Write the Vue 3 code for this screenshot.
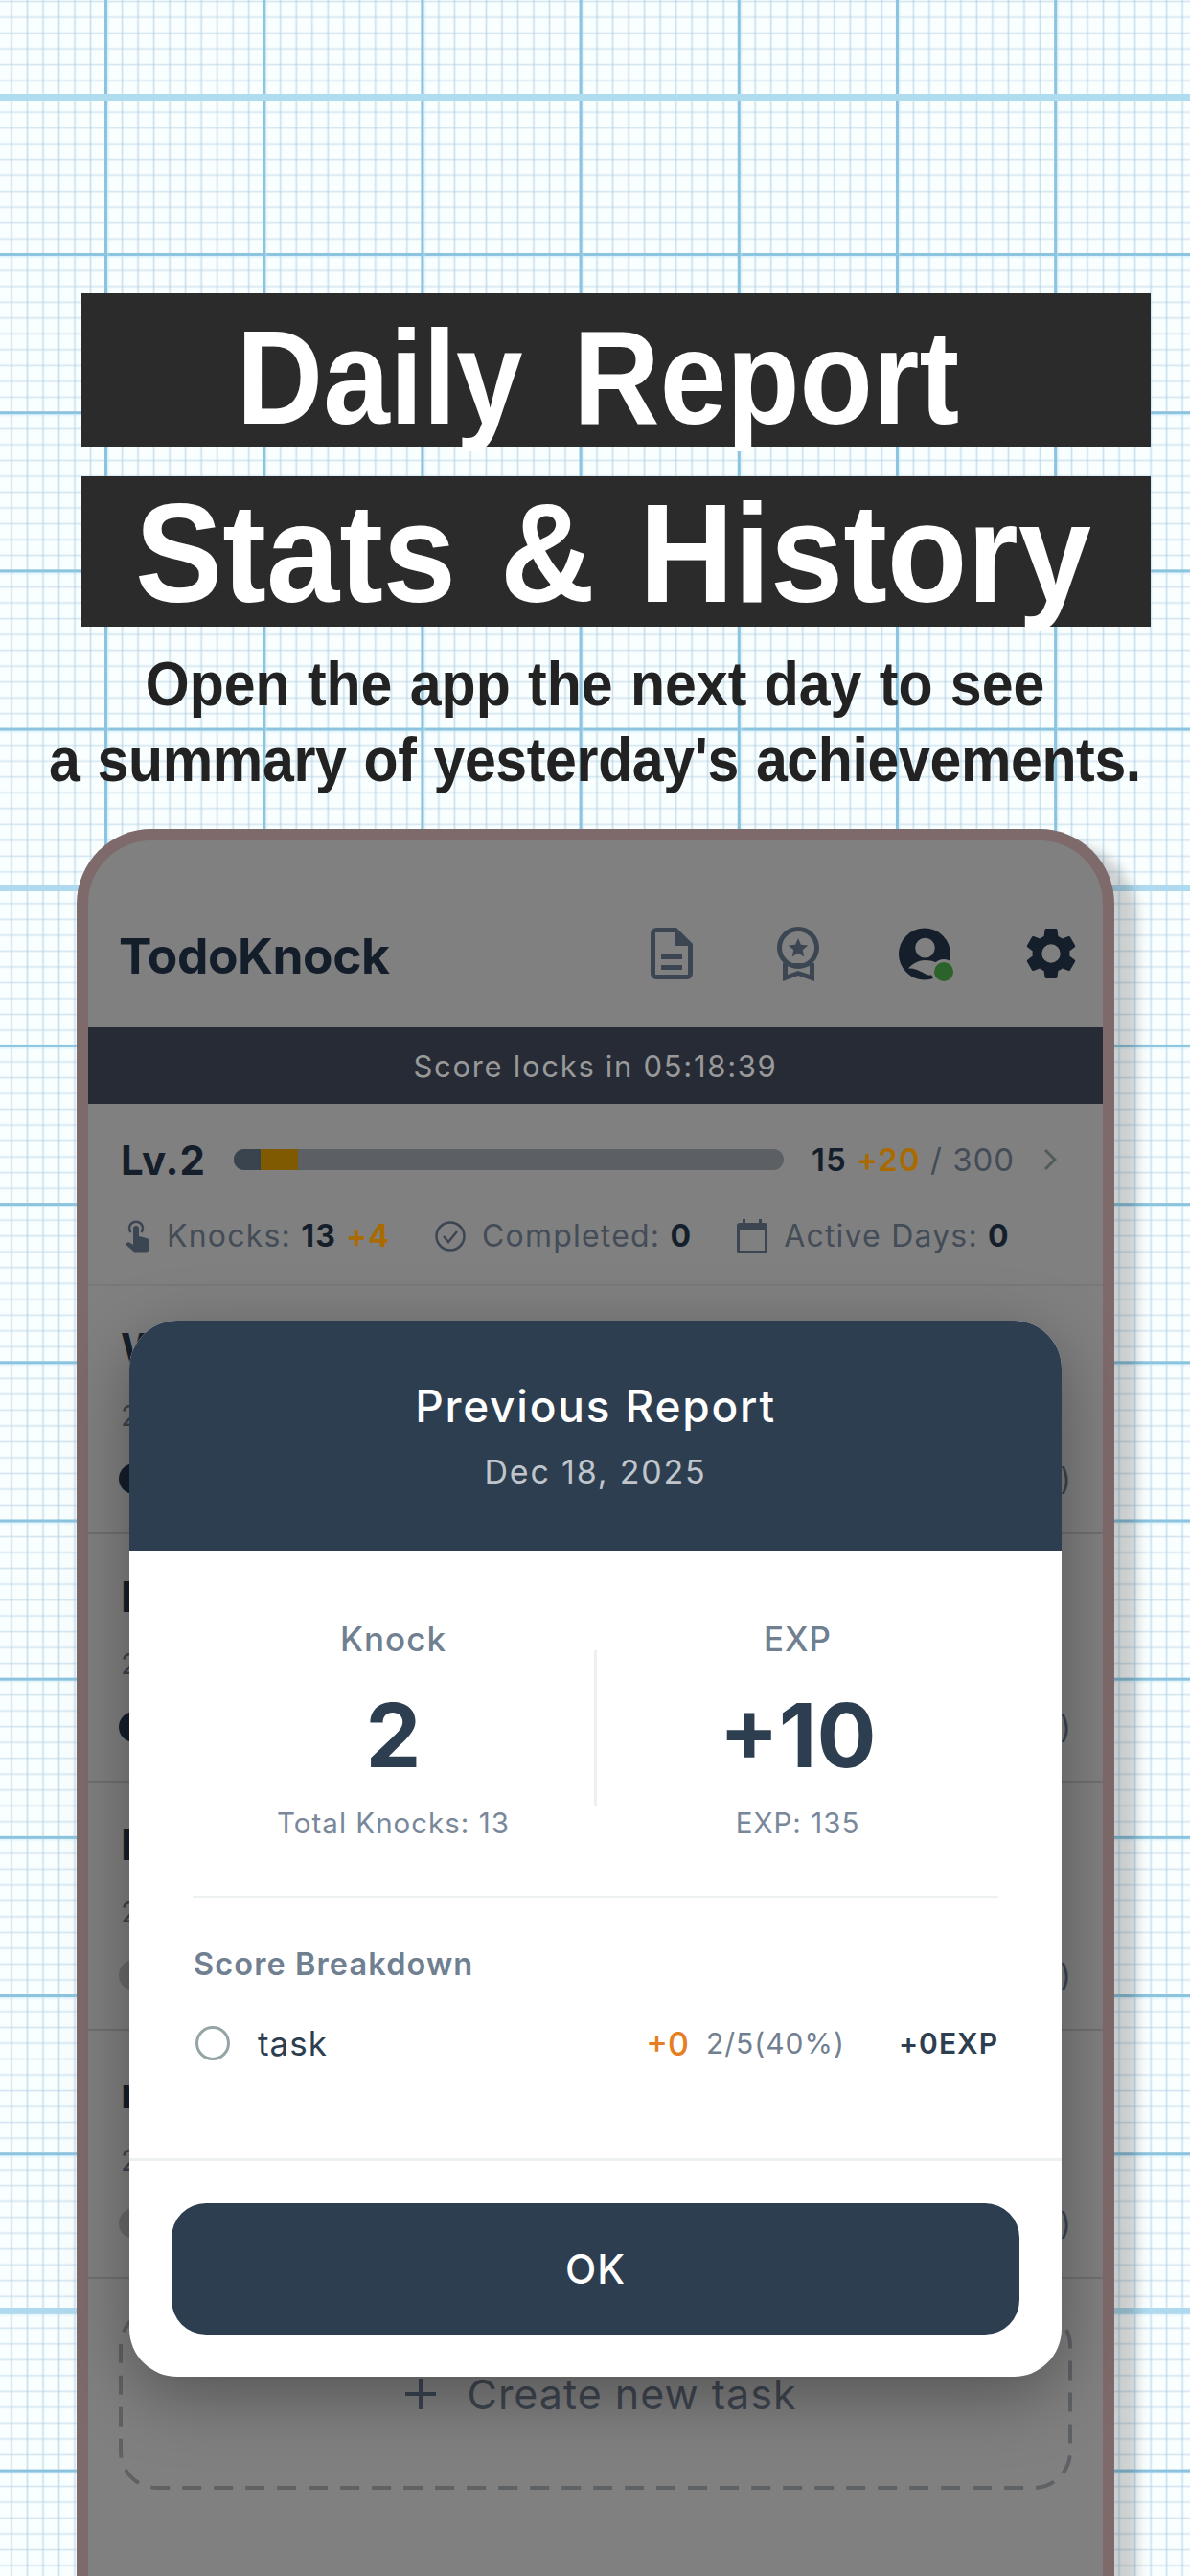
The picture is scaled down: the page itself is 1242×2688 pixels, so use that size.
<script setup>
const rows = [
  { id: 1, name: 'W', on: true },
  { id: 2, name: 'P', on: true },
  { id: 3, name: 'M', on: false },
  { id: 4, name: 'm', on: false },
]
</script>

<template>
  <div class="page">
    <div class="hero">
      <h1 class="bar bar-one"><span>Daily Report</span></h1>
      <h1 class="bar bar-two"><span>Stats &amp; History</span></h1>
      <p class="sub">
        <span>Open the app the next day to see</span>
        <span class="sub-two">a summary of yesterday's achievements.</span>
      </p>
    </div>

    <div class="phone">
      <header class="top">
        <span class="logo">TodoKnock</span>
        <div class="top-icons">
          <span class="slot">
            <svg width="44" height="54" viewBox="0 0 44 54"><path fill="#3b4652" fill-rule="evenodd" d="M6 0H27L44 17V48a6 6 0 0 1-6 6H6a6 6 0 0 1-6-6V6a6 6 0 0 1 6-6zM5 5V49H39V19H25V5zM11 28H33V33H11zM11 39H33V44H11z"/></svg>
          </span>
          <span class="slot">
            <svg width="44" height="57" viewBox="0 0 44 57"><circle cx="22" cy="22" r="19.500" fill="none" stroke="#3b4652" stroke-width="5"/><path fill="#3b4652" d="M22 12l2.900 6.800 7.300.6-5.500 4.800 1.600 7.200L22 27.600l-6.300 3.800 1.600-7.200-5.500-4.800 7.300-.6z"/><path fill="#3b4652" fill-rule="evenodd" d="M6 38V57L22 51 39 57V38zM11 41Q22 45 34 41V50L22 46 11 50z"/></svg>
          </span>
          <span class="slot avatar">
            <svg width="55" height="55" viewBox="0 0 55 55"><path fill="#151f2b" fill-rule="evenodd" d="M27.500 0a27.500 27.500 0 1 0 0 55a27.500 27.500 0 1 0 0-55zM28 10.500a10.500 10.500 0 1 1 0 21a10.500 10.500 0 0 1 0-21zM10 43C15 37 22 34 28 34C36 34 44 37 49 43L42 51C38 50 35 50 32 50C26 49 20 42 10 43z"/></svg>
            <i class="dot"></i>
          </span>
          <span class="slot">
            <svg width="52" height="54" viewBox="2.500 2 19 20"><path fill="#151f2b" d="M19.140 12.940c.04-.3.06-.61.06-.94s-.02-.64-.07-.94l2.030-1.580a.49.49 0 0 0 .12-.61l-1.920-3.320a.49.49 0 0 0-.59-.22l-2.390.96c-.5-.38-1.030-.7-1.620-.94l-.36-2.540a.48.48 0 0 0-.48-.41h-3.840a.48.48 0 0 0-.47.41l-.36 2.540c-.59.24-1.130.57-1.620.94l-2.390-.96a.48.48 0 0 0-.59.22L2.740 8.870a.48.480 0 0 0 .12.61l2.030 1.580c-.05.3-.09.63-.09.94s.02.64.07.94l-2.030 1.580a.49.49 0 0 0-.12.61l1.920 3.320c.12.22.37.29.59.22l2.390-.96c.5.38 1.030.7 1.620.94l.36 2.540c.05.24.24.41.48.41h3.840c.24 0 .44-.17.47-.41l.36-2.540c.59-.24 1.130-.56 1.620-.94l2.390.96c.22.08.47 0 .59-.22l1.920-3.320a.47.47 0 0 0-.12-.61l-2.010-1.580zM12 15.600A3.600 3.600 0 1 1 12 8.400a3.600 3.600 0 0 1 0 7.200z"/></svg>
          </span>
        </div>
      </header>

      <div class="banner">Score locks in 05:18:39</div>

      <section class="level">
        <div class="level-row">
          <b class="lv">Lv.2</b>
          <div class="track"><i class="fill-a"></i><i class="fill-b"></i></div>
          <span class="exp"><b>15</b> <b class="gold">+20</b> / 300</span>
          <svg class="chev" width="14" height="24" viewBox="0 0 14 24"><path d="M2 2l10 10L2 22" fill="none" stroke="#525b5c" stroke-width="3"/></svg>
        </div>
        <div class="stats">
          <span class="stat">
            <svg class="hand" width="26" height="34" viewBox="0 0 26 34"><path d="M5.500 13A7 7 0 1 1 16.500 13" fill="none" stroke="#3b4652" stroke-width="2.500"/><path fill="#3b4652" d="M8 9a3 3 0 0 1 6 0v8l8 2c1.500.4 2.500 1.500 2.500 3v8a3 3 0 0 1-3 3.500H9L0 25.500c1-2 3-2.500 5-1.500l3 2z"/></svg>
            <span>Knocks: <b>13</b> <b class="gold">+4</b></span>
          </span>
          <span class="stat">
            <svg width="32" height="32" viewBox="0 0 32 32"><circle cx="16" cy="16" r="14.500" fill="none" stroke="#3b4652" stroke-width="2.500"/><path d="M9 16l5 6 9-11" fill="none" stroke="#3b4652" stroke-width="2.500"/></svg>
            <span>Completed: <b>0</b></span>
          </span>
          <span class="stat">
            <svg width="32" height="36" viewBox="0 0 32 36"><path fill="#3b4652" fill-rule="evenodd" d="M6 0h3v4h14V0h3v4h3a3 3 0 0 1 3 3v26a3 3 0 0 1-3 3H3a3 3 0 0 1-3-3V7a3 3 0 0 1 3-3h3zM3 12v21h26V12z"/></svg>
            <span>Active Days: <b>0</b></span>
          </span>
        </div>
      </section>

      <ul class="tasks">
        <li v-for="r in rows" :key="r.id" class="task">
          <b class="task-name">{{ r.name }}</b>
          <span class="task-sub">2</span>
          <div class="task-bar">
            <i class="knob" :class="{ off: !r.on }"></i>
            <span class="paren">)</span>
          </div>
        </li>
      </ul>

      <div class="create">
        <svg class="dash" width="995" height="190" viewBox="0 0 995 190"><rect x="2" y="2" width="991" height="186" rx="38" fill="none" stroke="#5f6265" stroke-width="4" stroke-dasharray="20 13"/></svg>
        <svg width="36" height="36" viewBox="0 0 36 36"><path d="M18 2v32M2 18h32" stroke="#3b4652" stroke-width="4"/></svg>
        <span>Create new task</span>
      </div>

      <div class="modal">
        <div class="modal-head">
          <div class="modal-title">Previous Report</div>
          <div class="modal-date">Dec 18, 2025</div>
        </div>
        <div class="modal-body">
          <div class="summary">
            <div class="cell">
              <div class="cell-label">Knock</div>
              <div class="cell-num">2</div>
              <div class="cell-sub">Total Knocks: 13</div>
            </div>
            <div class="cell">
              <div class="cell-label">EXP</div>
              <div class="cell-num">+10</div>
              <div class="cell-sub">EXP: 135</div>
            </div>
          </div>
          <div class="breakdown">
            <div class="breakdown-title">Score Breakdown</div>
            <div class="line">
              <i class="ring"></i>
              <span class="line-name">task</span>
              <span class="line-plus">+0</span>
              <span class="line-ratio">2/5(40%)</span>
              <span class="line-exp">+0EXP</span>
            </div>
          </div>
        </div>
        <div class="modal-foot">
          <button class="ok">OK</button>
        </div>
      </div>
    </div>
  </div>
</template>

<style>
html, body { margin: 0; }
</style>

<style scoped>
.page {
  width: 1242px;
  height: 2688px;
  overflow: hidden;
  padding-top: 306px;
  box-sizing: border-box;
  font-family: Inter, "Liberation Sans", sans-serif;
  background-color: #f9feff;
  background-image:
    linear-gradient(180deg, #b0dcf0, #b0dcf0),
    linear-gradient(180deg, #aed9ee, #aed9ee),
    linear-gradient(180deg, #aed9ee, #aed9ee),
    linear-gradient(90deg, #8cc4df 0, #8cc4df 2.500px, rgba(190,230,245,.5) 3px, transparent 6px),
    linear-gradient(180deg, #8cc4df 0, #8cc4df 2.500px, rgba(190,230,245,.5) 3px, transparent 6px),
    linear-gradient(90deg, transparent 0, rgba(170,205,225,.6) 1.500px, transparent 3px),
    linear-gradient(180deg, transparent 0, rgba(175,205,225,.5) 1.500px, transparent 3px);
  background-size: 100% 7px, 100% 6px, 100% 6px, 165.200px 100%, 100% 165.200px, 16.520px 100%, 100% 16.520px;
  background-position: 0 98px, 0 924px, 0 2408px, 109px 0, 0 98.800px, 10.500px 0, 0 0;
  background-repeat: no-repeat, no-repeat, no-repeat, repeat, repeat, repeat, repeat;
}

.hero {
  display: flex;
  flex-direction: column;
  align-items: center;
}
.bar {
  align-self: flex-start;
  width: 1116px;
  margin: 0 0 0 85px;
  box-sizing: border-box;
  background: #2b2b2b;
  color: #fff;
  font-family: "Liberation Sans", Arial, sans-serif;
  font-weight: 700;
  text-align: center;
}
.bar span { display: block; }
.bar-one {
  height: 160px;
  padding: 8px 38px 0 0;
  font-size: 125px;
  line-height: 160px;
  word-spacing: 18px;
}
.bar-one span { transform: scaleY(1.11); }
.bar-two {
  height: 157px;
  margin-top: 31px;
  padding: 2px 6px 0 0;
  font-size: 137px;
  line-height: 157px;
  word-spacing: 8px;
}
.bar-two span { transform: scaleY(1.07); }
.sub {
  margin: 21px 0 0;
  font-family: "Liberation Sans", Arial, sans-serif;
  font-size: 59px;
  line-height: 79px;
  font-weight: 700;
  color: #222;
  text-align: center;
  word-spacing: 2px;
}
.sub span {
  display: block;
  transform: scaleY(1.1);
}
.sub .sub-two { letter-spacing: -.36px; }

.phone {
  position: relative;
  width: 1083px;
  height: 1900px;
  margin: 32px 0 0 80px;
  box-sizing: border-box;
  border: 12px solid #7e6a6a;
  border-bottom: 0;
  border-radius: 78px 78px 0 0;
  background: #808080;
  box-shadow: 24px 14px 12px rgba(0, 0, 0, .18);
}

.top {
  height: 195px;
  box-sizing: border-box;
  display: flex;
  align-items: center;
  justify-content: space-between;
  padding: 41px 27px 0 32px;
}
.logo {
  font-size: 51.500px;
  font-weight: 700;
  color: #141e2b;
  letter-spacing: -.5px;
  margin-top: 4px;
}
.top-icons {
  display: flex;
  align-items: center;
  gap: 78px;
}
.slot {
  width: 54px;
  display: flex;
  justify-content: center;
}
.avatar {
  position: relative;
}
.dot {
  position: absolute;
  right: -3px;
  bottom: -1px;
  width: 20px;
  height: 20px;
  border-radius: 50%;
  background: #2b632b;
  box-shadow: 0 0 0 3px #808080;
}

.banner {
  height: 80px;
  line-height: 82px;
  text-align: center;
  background: #262b36;
  color: #999;
  font-size: 31px;
  letter-spacing: 1.700px;
}

.level {
  height: 190px;
  padding: 33px 34px 0 34px;
  box-sizing: border-box;
  border-bottom: 2px solid #787878;
}
.level-row {
  display: flex;
  align-items: center;
  height: 50px;
}
.lv {
  width: 118px;
  font-size: 42px;
  color: #151f2b;
  letter-spacing: 1px;
}
.track {
  width: 574px;
  height: 22px;
  display: flex;
  overflow: hidden;
  border-radius: 11px;
  background: #5c6064;
}
.fill-a { width: 28px; background: #3a444f; }
.fill-b { width: 39px; background: #7f5a00; }
.exp {
  margin-left: 29px;
  font-size: 33px;
  color: #434c57;
  letter-spacing: 1px;
}
.exp b { color: #151f2b; font-weight: 600; }
.exp b.gold { color: #a96b00; }
.chev { margin-left: 30px; }

.stats {
  display: flex;
  gap: 47px;
  margin-top: 35px;
  font-size: 32px;
  color: #434c57;
  letter-spacing: 1.200px;
}
.stat {
  display: flex;
  align-items: center;
  gap: 17px;
}
.hand { margin-left: 5px; }
.stat b { color: #151f2b; font-weight: 700; }
.stat b.gold { color: #a96b00; }

.tasks {
  list-style: none;
  margin: 0;
  padding: 0;
}
.task {
  height: 259px;
  padding: 38px 33px 0 34px;
  box-sizing: border-box;
  border-bottom: 2px solid #707070;
}
.task-name {
  display: block;
  font-size: 44px;
  line-height: 54px;
  color: #151f2b;
}
.task-sub {
  display: block;
  margin-top: 25px;
  font-size: 30px;
  line-height: 36px;
  color: #3b4652;
}
.task-bar {
  display: flex;
  justify-content: space-between;
  align-items: center;
  height: 32px;
  margin-top: 32px;
  margin-left: -2px;
}
.knob {
  width: 32px;
  height: 32px;
  border-radius: 50%;
  background: #151f2b;
}
.knob.off { background: #6a6a6a; }
.paren {
  font-size: 32px;
  color: #3b4652;
}

.create {
  position: relative;
  margin: 30px 32px 0;
  height: 190px;
  box-sizing: border-box;
  padding: 0 0 10px 10px;
  display: flex;
  align-items: center;
  justify-content: center;
  gap: 30px;
  font-size: 43px;
  color: #3f4650;
  letter-spacing: 1px;
}
.dash {
  position: absolute;
  left: 0;
  top: 0;
}

.modal {
  position: absolute;
  left: 43px;
  top: 501px;
  width: 973px;
  height: 1102px;
  border-radius: 50px;
  overflow: hidden;
  display: flex;
  flex-direction: column;
  background: #fff;
  box-shadow: 0 20px 70px rgba(0, 0, 0, .34);
}
.modal-head {
  height: 240px;
  background: #2d3e50;
  text-align: center;
  padding-top: 63px;
  box-sizing: border-box;
}
.modal-title {
  font-size: 46px;
  font-weight: 500;
  color: #fff;
  letter-spacing: 1.800px;
  line-height: 52px;
}
.modal-date {
  margin-top: 22px;
  font-size: 34px;
  color: #bfc5cb;
  letter-spacing: 1.800px;
  line-height: 42px;
}
.modal-body {
  flex: 1;
  padding: 0 66px;
}
.summary {
  display: flex;
  height: 363px;
  padding-top: 73px;
  box-sizing: border-box;
  border-bottom: 3px solid #eef1f2;
}
.cell {
  flex: 1;
  text-align: center;
  height: 163px;
  margin-top: 31px;
}
.cell:first-child { border-right: 3px solid #ecf0f1; }
.cell-label {
  margin-top: -32px;
  font-size: 35px;
  font-weight: 500;
  color: #708090;
  letter-spacing: 1px;
  line-height: 40px;
}
.cell-num {
  margin-top: 31px;
  font-size: 92px;
  font-weight: 700;
  color: #2c3e50;
  line-height: 100px;
}
.cell-sub {
  margin-top: 23px;
  font-size: 29.500px;
  color: #78889a;
  letter-spacing: 1px;
  line-height: 36px;
}
.breakdown-title {
  margin: 49px 0 0 1px;
  font-size: 32.500px;
  font-weight: 600;
  color: #708090;
  letter-spacing: 1.100px;
  line-height: 40px;
}
.line {
  display: flex;
  align-items: center;
  margin-top: 40px;
  height: 44px;
  padding-left: 3px;
}
.ring {
  width: 36px;
  height: 36px;
  border: 3px solid #95a5a6;
  border-radius: 50%;
  box-sizing: border-box;
}
.line-name {
  margin-left: 29px;
  font-size: 35px;
  color: #2c3e50;
  letter-spacing: 1px;
  flex: 1;
}
.line-plus {
  font-size: 34px;
  font-weight: 500;
  color: #e67e22;
}
.line-ratio {
  margin-left: 18px;
  font-size: 30px;
  color: #708090;
  letter-spacing: 1px;
}
.line-exp {
  margin-left: 56px;
  font-size: 30px;
  font-weight: 600;
  color: #2c3e50;
  letter-spacing: 1px;
}
.modal-foot {
  height: 228px;
  box-sizing: border-box;
  border-top: 3px solid #eef1f2;
  padding: 44px 44px 0;
}
.ok {
  display: block;
  width: 885px;
  height: 137px;
  border: 0;
  border-radius: 36px;
  background: #2d3e50;
  color: #fff;
  font-family: inherit;
  font-size: 42px;
  font-weight: 500;
  letter-spacing: 1px;
}
</style>
